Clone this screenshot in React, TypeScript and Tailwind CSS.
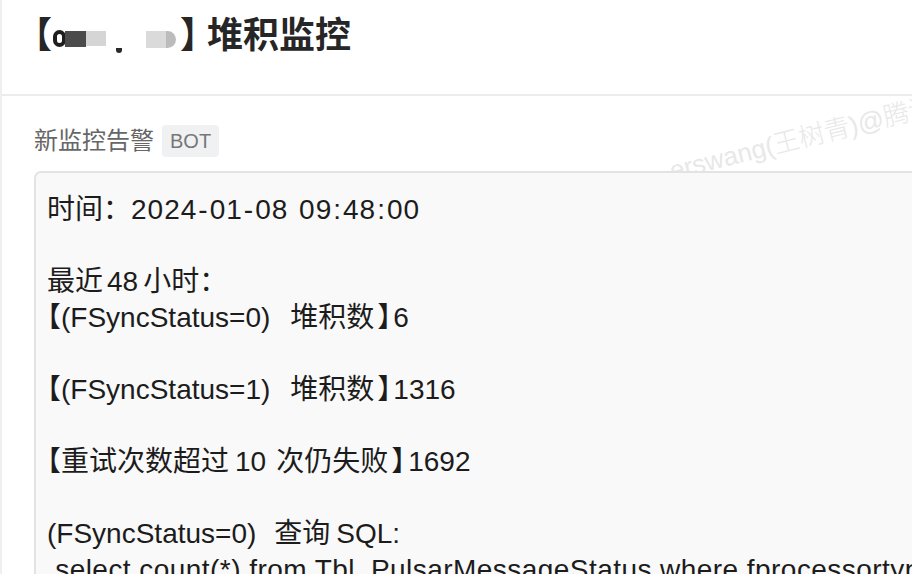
function Br({ c, className = '' }: { c: string; className?: string }) {
  return <span className={`[font-feature-settings:'halt'] ${className}`}>{c}</span>
}

export default function App() {
  return (
    <div
      className="w-[912px] h-[574px] overflow-hidden bg-white flex"
      style={{ fontFamily: '"Liberation Sans", "Noto Sans CJK SC", sans-serif' }}
    >
      <div className="w-[2px] shrink-0 bg-[#efefef]" />
      <div className="flex-1 min-w-0 flex flex-col">
        {/* Header */}
        <div className="h-[96px] shrink-0 border-b-2 border-[#ececec] flex items-start pl-[32px] pt-[16px]">
          <h1 className="flex items-center text-[36px] font-bold text-[#262626] leading-[40px]">
            <Br c="【" />
            <span className="relative w-[128px] h-[36px]">
              <span className="absolute left-[1px] top-[12px] w-[13px] h-[17px] rounded-full border-[4px] border-[#1e1e1e]" />
              <span className="absolute left-[13px] top-[13px] w-[21px] h-[16px] bg-[#4b4b4b]" />
              <span className="absolute left-[34px] top-[13px] w-[20px] h-[15px] bg-[#d5d5d5]" />
              <span className="absolute left-[64px] top-[30px] w-[6px] h-[5px] rounded-b-sm bg-[#2a2a2a]" />
              <span className="absolute left-[94px] top-[13px] w-[22px] h-[17px] bg-[#dadada]" />
              <span className="absolute left-[114px] top-[13px] w-[10px] h-[17px] rounded-r-full bg-[#bcbcbc]" />
            </span>
            <span className="[font-feature-settings:'halt'] mr-[9px]">】</span>
            <span>堆积监控</span>
          </h1>
        </div>

        {/* Message */}
        <div className="relative flex-1 pl-[32px] pt-[29px]">
          <div className="absolute left-[668px] top-[62px] -rotate-[14deg] origin-left text-[26px] leading-[26px] font-light text-[#e8e8e8] whitespace-nowrap select-none">
            erswang(王树青)@腾讯
          </div>
          <div className="relative flex items-center gap-[8px]">
            <span className="text-[24px] leading-[32px] text-[#666]">新监控告警</span>
            <span className="px-[8px] h-[32px] flex items-center rounded-[4px] bg-[#f0f1f2] text-[20px] text-[#777]">BOT</span>
          </div>
          <div className="relative mt-[14px] w-[1000px] rounded-[7px] border-2 border-[#e3e3e3] bg-[#f9f9f9] pl-[11px] pt-[19px] pb-[20px] text-[28px] leading-[36px] text-[#1c1c1c] whitespace-pre">
            <div>
              时间：<span className="tracking-[1px]">2024<span className="mx-[1px]">-</span>01<span className="mx-[1px]">-</span>08<span className="mx-[1px]"> </span>09<span className="mx-[1px]">:</span>48<span className="mx-[1px]">:</span>00</span>
            </div>
            <div className="h-[36px]" />
            <div>
              最近<span className="ml-[4px]">48</span><span className="ml-[5px]">小时：</span>
            </div>
            <div>
              <Br c="【" />(FSyncStatus=0)<span className="ml-[20px]">堆积数</span><Br c="】" className="ml-[3px]" /><span className="ml-[2px]">6</span>
            </div>
            <div className="h-[36px]" />
            <div>
              <Br c="【" />(FSyncStatus=1)<span className="ml-[20px]">堆积数</span><Br c="】" className="ml-[3px]" /><span className="ml-[2px]">1316</span>
            </div>
            <div className="h-[36px]" />
            <div>
              <Br c="【" />重试次数超过<span className="ml-[6px]">10</span><span className="ml-[10px]">次仍失败</span><Br c="】" className="ml-[3px]" /><span className="ml-[3px]">1692</span>
            </div>
            <div className="h-[36px]" />
            <div>
              (FSyncStatus=0)<span className="ml-[18px]">查询</span><span className="ml-[6px]">SQL:</span>
            </div>
            <div className="tracking-[0.45px]"> select count(*) from Tbl_PulsarMessageStatus where fprocessortype = 1 and FSyncStatus = 0</div>
          </div>
        </div>
      </div>
    </div>
  )
}
